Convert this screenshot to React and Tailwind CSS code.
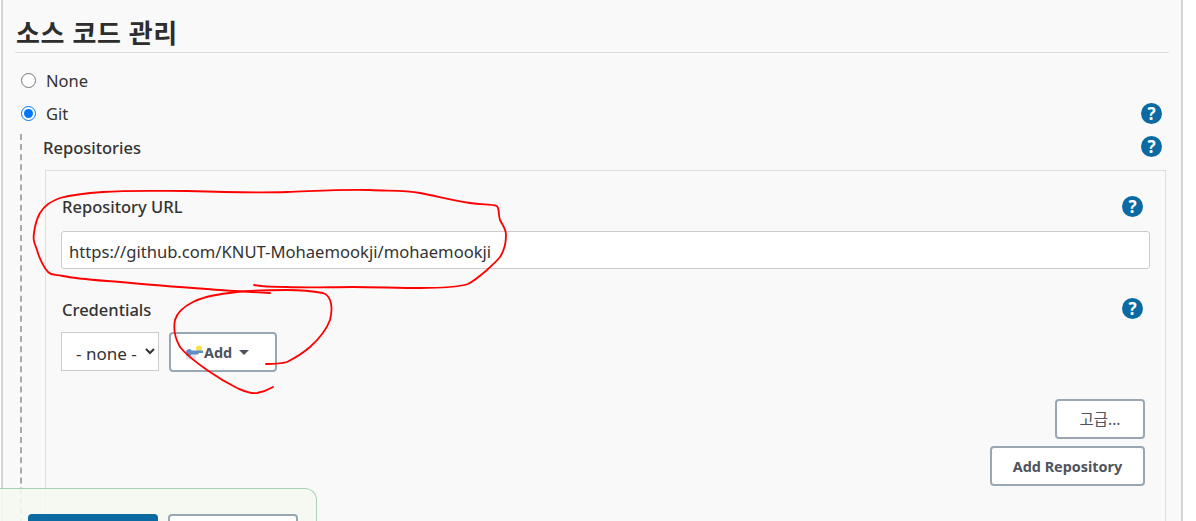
const font = { fontFamily: '"Noto Sans", "Noto Sans CJK KR", sans-serif' }

const HelpIcon = ({ className = '' }) => (
  <span className={`flex h-[21px] w-[21px] shrink-0 items-center justify-center rounded-full bg-[#0b6aa2] text-[17px] leading-none font-bold text-white ${className}`}>
    ?
  </span>
)

const KeyIcon = () => (
  <svg width="20" height="16" viewBox="0 0 20 16" className="shrink-0">
    <path d="M1 9 h10" stroke="#c9d3dd" strokeWidth="5" opacity="0.6" transform="translate(0 3)" />
    <circle cx="14" cy="3.5" r="3" fill="#f4e34f" />
    <path d="M1 7 a3 3 0 0 1 5.5 -1.5 h11.5 v2.5 h-4 l-1 1.5 h-6.5 a3 3 0 0 1 -5.5 -2.5z" fill="#5f8fc4" />
  </svg>
)

const Button = ({ className, children }) => (
  <button className={`flex items-center rounded-[4px] border-2 border-[#9aa7b2] bg-white pt-[2px] text-[14.4px] font-bold text-[#4d545d] ${className}`}>
    {children}
  </button>
)

const stroke1 =
  'M270 293 C250 292 235 291 220 290 C180 287 150 285 120 282 C95 280 76 279 63 276 C54 274 52 276 48 272 C42 265 39 257 37 250 C34 242 33 240 34 233 C35 225 36 220 40 213 C45 205 50 202 60 198 C75 194 88 193 103 192 C130 190 160 191 187 191 C220 192 255 193 287 192 C315 191 345 189 370 190 C390 191 405 190 420 193 C440 197 455 201 470 203 C482 205 490 204 497 206 C500 210 498 215 500 220 C503 226 506 229 506 235 C506 245 504 251 500 257 C496 262 492 265 487 270 C480 276 474 281 468 284 C455 288 437 288 420 288 C398 288 375 287 353 287 C330 287 308 288 287 287 C275 287 263 287 254 285'

const stroke2 =
  'M266 364 C274 364 280 364 287 362 C295 358 303 353 310 347 C320 338 326 331 330 320 C332 312 332 305 330 300 C328 295 326 294 323 293 C312 291 300 290 287 290 C270 290 253 290 237 292 C220 294 205 296 193 302 C183 307 177 313 175 320 C173 330 176 340 180 347 C187 356 197 363 207 370 C217 377 227 383 237 388 C244 391 250 394 257 393 C263 392 268 390 273 387'

const App = () => {
  return (
    <div style={font} className="relative h-[521px] w-[1196px] overflow-hidden bg-white text-[16.5px] text-[#333]">
      <div className="ml-px h-full w-[1182px] border-x-2 border-[#d4d4d4] bg-[#f9f9f9] pt-[15px] pr-[12px] pl-[12px]">
        <h2 className="h-[38px] border-b border-[#dedede] pl-px text-[26px] leading-[37px] font-bold tracking-[0.6px] text-[#2d2d2d]">
          소스 코드 관리
        </h2>

        <label className="mt-[15px] flex h-[24px] items-center pl-[6px]">
          <input type="radio" name="scm" className="m-0 h-[15px] w-[15px]" />
          <span className="ml-[10px] pt-[3px]">None</span>
        </label>

        <div className="mt-[9px] flex h-[24px] items-center justify-between pr-[7px] pl-[6px]">
          <label className="flex items-center">
            <input type="radio" name="scm" defaultChecked className="m-0 h-[15px] w-[15px]" />
            <span className="ml-[10px] pt-[3px]">Git</span>
          </label>
          <HelpIcon />
        </div>

        <div className="mt-[9px] ml-[5px] h-[400px] border-l-2 border-dashed border-[#aaa] pt-[2px] pl-[21px]">
          <div className="flex h-[24px] items-center justify-between pr-[7px]">
            <span className="font-[550]">Repositories</span>
            <HelpIcon className="-mt-[3px]" />
          </div>

          <div className="mt-[10px] ml-[2px] h-[400px] w-[1121px] border border-[#dedede] pr-[15px] pl-[15px]">
            <div className="mt-[24px] flex h-[24px] items-center justify-between pr-[7px]">
              <span className="pl-px font-[550]">Repository URL</span>
              <HelpIcon className="-mt-[2px]" />
            </div>
            <input
              readOnly
              value="https://github.com/KNUT-Mohaemookji/mohaemookji"
              className="mt-[12px] block h-[38px] w-[1089px] rounded-[3px] border border-[#ccc] bg-white px-[7px] pt-[2px] text-[16.6px] text-[#333]"
            />

            <div className="mt-[29px] flex h-[24px] items-center justify-between pr-[7px]">
              <span className="pl-px font-[550]">Credentials</span>
              <HelpIcon className="-mt-[3px]" />
            </div>
            <div className="mt-[10px] flex items-start gap-[10px]">
              <select className="h-[39px] w-[98px] border border-[#ccc] bg-white pt-[4px] pl-[10px] text-[17px] text-[#333]">
                <option>- none -</option>
              </select>
              <Button className="h-[40px] w-[108px] pl-[14px]">
                <KeyIcon />
                <span className="-ml-[1px]">Add</span>
                <span className="mb-[2px] ml-[7px] h-0 w-0 border-x-[5px] border-t-[5px] border-x-transparent border-t-[#4d545d]" />
              </Button>
            </div>

            <div className="mt-[27px] flex flex-col items-end gap-[7px] pr-[5px]">
              <Button className="h-[40px] w-[90px] justify-center text-[15.5px] !font-normal">고급...</Button>
              <Button className="h-[40px] w-[155px] justify-center">Add Repository</Button>
            </div>
          </div>
        </div>
      </div>

      <div className="absolute bottom-0 left-0 flex h-[33px] w-[317px] gap-[10px] rounded-tr-[12px] border-t border-r border-[#a9d1b5] bg-[#f4f8f1]/90 pt-[25px] pl-[28px]">
        <div className="h-[20px] w-[130px] rounded-[4px] bg-[#0b6aa2]" />
        <div className="h-[20px] w-[130px] rounded-[4px] border-2 border-[#9aa7b2] bg-white" />
      </div>

      <svg width="1196" height="521" className="pointer-events-none absolute inset-0" fill="none" stroke="#f00" strokeWidth="1.8" strokeLinecap="round">
        <path d={stroke1} />
        <path d={stroke2} />
      </svg>
    </div>
  )
}

export default App
